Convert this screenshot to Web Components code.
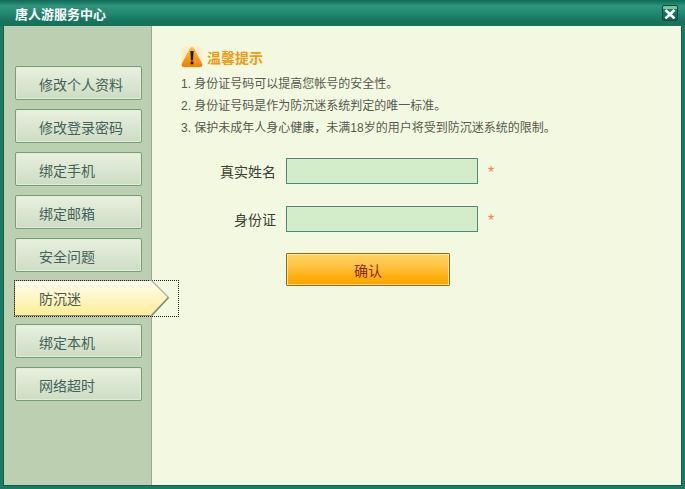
<!DOCTYPE html>
<html lang="zh">
<head>
<meta charset="utf-8">
<title>唐人游服务中心</title>
<style>
html, body { margin: 0; padding: 0; height: 100%; }
body { font-family: "Liberation Sans", "Noto Sans CJK SC", sans-serif; overflow: hidden; }
</style>
</head>
<body>
<service-window heading="唐人游服务中心">
	<side-menu slot="menu">
		<menu-item>修改个人资料</menu-item>
		<menu-item>修改登录密码</menu-item>
		<menu-item>绑定手机</menu-item>
		<menu-item>绑定邮箱</menu-item>
		<menu-item>安全问题</menu-item>
		<menu-item active>防沉迷</menu-item>
		<menu-item>绑定本机</menu-item>
		<menu-item>网络超时</menu-item>
	</side-menu>
	<tip-box heading="温馨提示">
		<div>1. 身份证号码可以提高您帐号的安全性。</div>
		<div>2. 身份证号码是作为防沉迷系统判定的唯一标准。</div>
		<div>3. 保护未成年人身心健康，未满18岁的用户将受到防沉迷系统的限制。</div>
	</tip-box>
	<form-row label="真实姓名"></form-row>
	<form-row label="身份证"></form-row>
	<confirm-button>确认</confirm-button>
</service-window>

<script>
const cjk = `"Liberation Sans", "Noto Sans CJK SC", sans-serif`;

class ServiceWindow extends HTMLElement {
	constructor() {
		super();
		this.attachShadow({mode: "open"});
		this.shadowRoot.innerHTML = `
		<style>
		:host {
			display: flex;
			flex-direction: column;
			box-sizing: border-box;
			width: 685px;
			height: 489px;
			background: #1b7a64;
			padding: 0 3px 3px 3px;
			font-family: ${cjk};
		}
		header {
			flex: none;
			display: flex;
			align-items: center;
			justify-content: space-between;
			height: 26px;
			box-sizing: border-box;
			margin: 0 -3px;
			padding: 0 7px 0 15px;
			background: linear-gradient(#0f6a55 0, #17775f 2px, #2f957c 6px, #268a72 12px, #14735c 22px, #14735c 100%);
			color: #fff;
			font-size: 13px;
			font-weight: bold;
		}
		button {
			width: 16px;
			height: 16px;
			padding: 0;
			border: 1px solid #0d4a3d;
			border-radius: 2px;
			background: linear-gradient(#7cc596 0, #7cc596 3px, #1d7e69 3px, #14604f 100%);
			display: flex;
			align-items: center;
			justify-content: center;
			box-sizing: border-box;
		}
		.body {
			flex: 1;
			display: flex;
			min-height: 0;
			border: 1px solid #0e5f4d;
			border-top: 0;
		}
		.side {
			flex: none;
			width: 147px;
			background: #bccfb0;
			border-right: 1px solid #94ac8f;
			padding-top: 40px;
		}
		main {
			flex: 1;
			background: #f3f8e0;
			padding: 19px 0 0 29px;
		}
		</style>
		<header>
			<span id="heading"></span>
			<button type="button" aria-label="关闭">
				<svg width="12" height="11" viewBox="0 0 12 11"><path d="M1.5 2 L10.5 10.5 M10.5 2 L1.5 10.5" stroke="#fff" stroke-width="2.6" fill="none"/></svg>
			</button>
		</header>
		<div class="body">
			<div class="side"><slot name="menu"></slot></div>
			<main><slot></slot></main>
		</div>
		`;
		this.shadowRoot.getElementById("heading").textContent = this.getAttribute("heading");
	}
}

class SideMenu extends HTMLElement {
	constructor() {
		super();
		this.attachShadow({mode: "open"});
		this.shadowRoot.innerHTML = `
		<style>
		:host {
			display: flex;
			flex-direction: column;
			gap: 9px;
			padding-left: 11px;
		}
		</style>
		<slot></slot>
		`;
	}
}

class MenuItem extends HTMLElement {
	constructor() {
		super();
		this.attachShadow({mode: "open"});
		this.shadowRoot.innerHTML = `
		<style>
		:host {
			display: flex;
			align-items: center;
			position: relative;
			box-sizing: border-box;
			width: 127px;
			height: 34px;
			padding: 2px 0 0 23px;
			border: 1px solid #71a077;
			border-radius: 2px;
			background: linear-gradient(#e9f0df, #cddcc4);
			box-shadow: inset 0 0 0 1px #e4ecd9;
			color: #43625a;
			font-size: 14px;
			cursor: pointer;
		}
		:host([active]) {
			height: 36px;
			width: 137px;
			margin: -1px 0 -1px -1px;
			padding: 0 0 0 24px;
			border: 0;
			border-radius: 2px 0 0 2px;
			background: linear-gradient(#fffdf0, #ffee96);
			box-shadow: none;
			color: #45574f;
			border-left: 1px solid #8c8c78;
			border-bottom: 1px solid #8c8c78;
			border-top: 1px solid #b5b5a0;
		}
		:host([active])::before {
			content: "";
			position: absolute;
			left: -1px;
			top: -1px;
			width: 165px;
			height: 37px;
			box-sizing: border-box;
			border: 1px dotted #222;
			pointer-events: none;
		}
		svg {
			display: none;
			position: absolute;
			left: 135px;
			top: -1px;
		}
		:host([active]) svg {
			display: block;
		}
		</style>
		<slot></slot>
		<svg width="22" height="36" viewBox="0 0 22 36">
			<defs>
				<linearGradient id="arrow-fill" x1="0" y1="0" x2="0" y2="1">
					<stop offset="0" stop-color="#fffdf0"/>
					<stop offset="1" stop-color="#ffee96"/>
				</linearGradient>
			</defs>
			<path d="M0 0.5 H1.5 L18.5 17.5 L1.5 35.5 H0 Z" fill="url(#arrow-fill)"/>
			<path d="M1.5 0.5 L18.5 17.5" fill="none" stroke="#a9b39f" stroke-width="1.2"/>
			<path d="M18.5 17.5 L1.5 35.5" fill="none" stroke="#7f8a78" stroke-width="1.8"/>
		</svg>
		`;
	}
}

class TipBox extends HTMLElement {
	constructor() {
		super();
		this.attachShadow({mode: "open"});
		this.shadowRoot.innerHTML = `
		<style>
		:host {
			display: block;
			color: #55594f;
			font-size: 12px;
			line-height: 22px;
			margin-bottom: -3px;
		}
		h2 {
			display: flex;
			align-items: center;
			gap: 4px;
			margin: 0 0 4px 0;
			height: 24px;
			font-size: 14px;
			font-weight: bold;
			color: #f39a0d;
		}
		h2 span {
			padding-top: 2px;
		}
		</style>
		<h2>
			<svg width="22" height="22" viewBox="0 0 22 22">
				<defs>
					<linearGradient id="warn" x1="0" y1="0" x2="0" y2="1">
						<stop offset="0" stop-color="#ffc342"/>
						<stop offset="1" stop-color="#f07f00"/>
					</linearGradient>
				</defs>
				<rect x="0.5" y="0.5" width="21" height="21" rx="3" fill="#f9edd2"/>
				<path d="M11 1 C12 1 12.6 1.6 13.2 2.6 L21 17.4 C22 19.4 21 21 19 21 H3 C1 21 0 19.4 1 17.4 L8.8 2.6 C9.4 1.6 10 1 11 1 Z" fill="url(#warn)"/>
				<path d="M9.4 5 H12.6 L12 14.5 H10 Z" fill="#1e1a12"/>
				<rect x="9.6" y="15.5" width="2.8" height="2.8" fill="#1e1a12"/>
			</svg>
			<span id="heading"></span>
		</h2>
		<slot></slot>
		`;
		this.shadowRoot.getElementById("heading").textContent = this.getAttribute("heading");
	}
}

class FormRow extends HTMLElement {
	constructor() {
		super();
		this.attachShadow({mode: "open"});
		this.shadowRoot.innerHTML = `
		<style>
		:host {
			display: flex;
			align-items: center;
			height: 26px;
			margin-top: 22px;
			font-size: 14px;
			color: #3c3f36;
		}
		label {
			flex: none;
			width: 95px;
			text-align: right;
			margin-right: 10px;
		}
		input {
			box-sizing: border-box;
			width: 192px;
			height: 26px;
			padding: 0 4px;
			border: 1px solid #4a8a78;
			background: #d3edcb;
			outline: none;
		}
		span {
			margin-left: 10px;
			color: #f5814a;
			font-size: 16px;
			line-height: 26px;
			padding-top: 4px;
		}
		</style>
		<label for="field"></label>
		<input id="field" type="text">
		<span>*</span>
		`;
		this.shadowRoot.querySelector("label").textContent = this.getAttribute("label");
	}
}

class ConfirmButton extends HTMLElement {
	constructor() {
		super();
		this.attachShadow({mode: "open"});
		this.shadowRoot.innerHTML = `
		<style>
		:host {
			display: block;
			margin: 21px 0 0 105px;
		}
		button {
			display: block;
			box-sizing: border-box;
			width: 164px;
			height: 33px;
			padding: 0;
			border: 1px solid #a8650f;
			border-radius: 1px;
			background: linear-gradient(#ffd45e 0, #ffc548 35%, #ffa800 85%, #ffa600 100%);
			box-shadow: inset 0 0 0 1px #ffeaa8;
			color: #8a2a12;
			font-family: ${cjk};
			font-size: 14px;
		}
		</style>
		<button type="button"><slot></slot></button>
		`;
	}
}

customElements.define("service-window", ServiceWindow);
customElements.define("side-menu", SideMenu);
customElements.define("menu-item", MenuItem);
customElements.define("tip-box", TipBox);
customElements.define("form-row", FormRow);
customElements.define("confirm-button", ConfirmButton);
</script>
</body>
</html>
